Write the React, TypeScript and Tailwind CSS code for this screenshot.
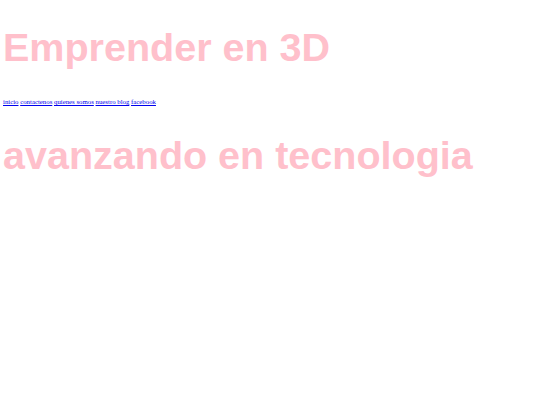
export default function App() {
  return (
    <div className="min-h-[405px] bg-white px-[3px] pt-[1px]">
      <h1 className="mt-[20px] text-[39.5px] leading-[52px] font-bold text-[#ffc0cb] font-['Liberation_Sans',Arial,sans-serif]">
        Emprender en 3D
      </h1>
      <nav className="mt-[25px] text-[6.8px] leading-[8px] font-['Liberation_Serif','Times_New_Roman',serif]">
        <a href="#" className="text-[#0000ee] underline">inicio</a>{" "}
        <a href="#" className="text-[#0000ee] underline">contactenos</a>{" "}
        <a href="#" className="text-[#0000ee] underline">quienes somos</a>{" "}
        <a href="#" className="text-[#0000ee] underline">nuestro blog</a>{" "}
        <a href="#" className="text-[#0000ee] underline">facebook</a>
      </nav>
      <h2 className="mt-[23px] text-[39.5px] leading-[52px] font-bold text-[#ffc0cb] font-['Liberation_Sans',Arial,sans-serif]">
        avanzando en tecnologia
      </h2>
    </div>
  );
}
